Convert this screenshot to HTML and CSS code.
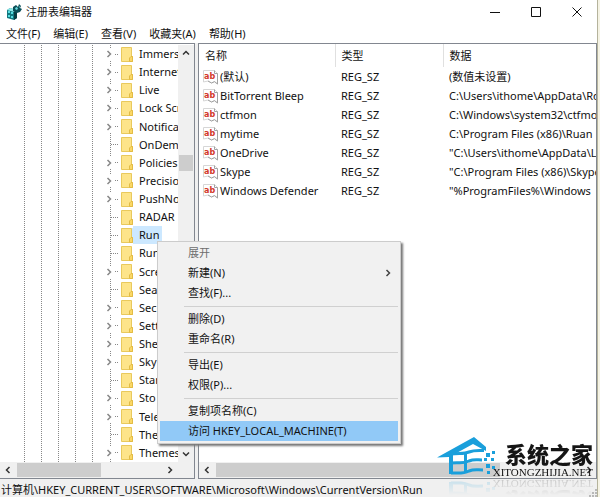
FILE: index.html
```
<!DOCTYPE html>
<html lang="zh-CN">
    <head>
        <title>注册表编辑器</title>
        <meta charset="UTF-8">
        <meta name="viewport" content="width=device-width, initial-scale=1.0">
        <link rel="stylesheet" href="styles.css">
    </head>
    <body>
        <!-- Shared icons -->
        <svg class="symbols" width="0" height="0">
            <symbol id="folder" viewBox="0 0 12 15">
                <path d="M.5.5h10v9h1v5h-11z" fill="#fde48a" stroke="#e9c95c"/>
                <path d="M10 9.500L8.500 11v3.500h3V9.500z" fill="#fbd866" stroke="#e2bb45"/>
            </symbol>
            <symbol id="string" viewBox="0 0 15 15">
                <path d="M.5.500h11l3 3v10.500l-3-2-3 1-3.500-2-4.500 1z" fill="#fff" stroke="#d6d6d6"/>
                <path d="M11.500.500v3h3v10.500l-3-2.500-3 1.500-3.500-2" fill="none" stroke="#a2a2a2"/>
                <text x="1" y="9" class="ab">ab</text>
            </symbol>
            <symbol id="arrow" viewBox="0 0 8 8">
                <path d="M2.500 1L5.500 4L2.500 7" fill="none" stroke="currentColor" stroke-width="1.500"/>
            </symbol>
        </svg>

        <div class="window">
            <header class="titlebar">
                <svg class="app-icon" width="16" height="17" viewBox="0 0 16 17">
                    <path d="M1 6l3-2 7 2v8l-3 2-7-2z" fill="#12777f"/>
                    <path d="M2 7h2v2H2zM5 8h2v2H5zM2 11h2v2H2zM5 12h2v2H5z" fill="#54dce0"/>
                    <path d="M1 6l3-2 7 2-3 2z" fill="#8fe9ea"/>
                    <path d="M8 8v8l3-2V6z" fill="#063c42"/>
                    <path d="M7 3l3-2 2 2 1-3 2 2-1 2 2 1-2 3-3 1-4-2z" fill="#0a4f58"/>
                    <path d="M9 4l2-1 1 2-2 1zM13 3l1-1v2z" fill="#6be0e4"/>
                </svg>
                <h1>注册表编辑器</h1>
                <div class="window-buttons">
                    <button aria-label="最小化"><svg width="10" height="10"><path d="M0 5.500h10"/></svg></button>
                    <button aria-label="最大化"><svg width="10" height="10"><path d="M.5.500h9v9h-9z"/></svg></button>
                    <button aria-label="关闭"><svg width="10" height="10"><path d="M.5.500l9 9M9.500.500l-9 9"/></svg></button>
                </div>
            </header>

            <nav class="menubar">
                <button>文件(F)</button>
                <button>编辑(E)</button>
                <button>查看(V)</button>
                <button>收藏夹(A)</button>
                <button>帮助(H)</button>
            </nav>

            <main class="panes">
                <section class="pane tree-pane">
                    <div class="tree-area">
                        <ul class="tree">
                            <li class="parent"><svg class="toggle"><use href="#arrow"/></svg><svg class="folder"><use href="#folder"/></svg><span>Immersive</span></li>
                            <li class="parent"><svg class="toggle"><use href="#arrow"/></svg><svg class="folder"><use href="#folder"/></svg><span>Internet</span></li>
                            <li class="parent"><svg class="toggle"><use href="#arrow"/></svg><svg class="folder"><use href="#folder"/></svg><span>Live</span></li>
                            <li class="parent"><svg class="toggle"><use href="#arrow"/></svg><svg class="folder"><use href="#folder"/></svg><span>Lock Screen</span></li>
                            <li class="parent"><svg class="toggle"><use href="#arrow"/></svg><svg class="folder"><use href="#folder"/></svg><span>Notifications</span></li>
                            <li><svg class="folder"><use href="#folder"/></svg><span>OnDemand</span></li>
                            <li class="parent"><svg class="toggle"><use href="#arrow"/></svg><svg class="folder"><use href="#folder"/></svg><span>Policies</span></li>
                            <li class="parent"><svg class="toggle"><use href="#arrow"/></svg><svg class="folder"><use href="#folder"/></svg><span>Precision</span></li>
                            <li class="parent"><svg class="toggle"><use href="#arrow"/></svg><svg class="folder"><use href="#folder"/></svg><span>PushNotifications</span></li>
                            <li><svg class="folder"><use href="#folder"/></svg><span>RADAR</span></li>
                            <li class="selected"><svg class="folder"><use href="#folder"/></svg><span>Run</span></li>
                            <li><svg class="folder"><use href="#folder"/></svg><span>Run</span></li>
                            <li class="parent"><svg class="toggle"><use href="#arrow"/></svg><svg class="folder"><use href="#folder"/></svg><span>Scre</span></li>
                            <li><svg class="folder"><use href="#folder"/></svg><span>Sea</span></li>
                            <li class="parent"><svg class="toggle"><use href="#arrow"/></svg><svg class="folder"><use href="#folder"/></svg><span>Sec</span></li>
                            <li class="parent"><svg class="toggle"><use href="#arrow"/></svg><svg class="folder"><use href="#folder"/></svg><span>Sett</span></li>
                            <li class="parent"><svg class="toggle"><use href="#arrow"/></svg><svg class="folder"><use href="#folder"/></svg><span>She</span></li>
                            <li class="parent"><svg class="toggle"><use href="#arrow"/></svg><svg class="folder"><use href="#folder"/></svg><span>Sky</span></li>
                            <li><svg class="folder"><use href="#folder"/></svg><span>Star</span></li>
                            <li class="parent"><svg class="toggle"><use href="#arrow"/></svg><svg class="folder"><use href="#folder"/></svg><span>Sto</span></li>
                            <li class="parent"><svg class="toggle"><use href="#arrow"/></svg><svg class="folder"><use href="#folder"/></svg><span>Tele</span></li>
                            <li><svg class="folder"><use href="#folder"/></svg><span>The</span></li>
                            <li class="parent"><svg class="toggle"><use href="#arrow"/></svg><svg class="folder"><use href="#folder"/></svg><span>Themes</span></li>
                        </ul>
                        <div class="scroll-v">
                            <svg class="up"><use href="#arrow"/></svg>
                            <div class="thumb"></div>
                            <svg class="down"><use href="#arrow"/></svg>
                        </div>
                    </div>
                    <div class="scroll-h">
                        <svg class="left"><use href="#arrow"/></svg>
                        <div class="track"><div class="thumb tree-thumb"></div></div>
                        <svg><use href="#arrow"/></svg>
                    </div>
                </section>

                <section class="pane value-pane">
                    <div class="values">
                        <table>
                            <thead>
                                <tr><th class="name">名称</th><th class="type">类型</th><th>数据</th></tr>
                            </thead>
                            <tbody>
                                <tr><td><svg class="string"><use href="#string"/></svg>(默认)</td><td>REG_SZ</td><td>(数值未设置)</td></tr>
                                <tr><td><svg class="string"><use href="#string"/></svg>BitTorrent Bleep</td><td>REG_SZ</td><td>C:\Users\ithome\AppData\Ro</td></tr>
                                <tr><td><svg class="string"><use href="#string"/></svg>ctfmon</td><td>REG_SZ</td><td>C:\Windows\system32\ctfmon</td></tr>
                                <tr><td><svg class="string"><use href="#string"/></svg>mytime</td><td>REG_SZ</td><td>C:\Program Files (x86)\Ruan</td></tr>
                                <tr><td><svg class="string"><use href="#string"/></svg>OneDrive</td><td>REG_SZ</td><td>"C:\Users\ithome\AppData\Lo</td></tr>
                                <tr><td><svg class="string"><use href="#string"/></svg>Skype</td><td>REG_SZ</td><td>"C:\Program Files (x86)\Skype</td></tr>
                                <tr><td><svg class="string"><use href="#string"/></svg>Windows Defender</td><td>REG_SZ</td><td>"%ProgramFiles%\Windows</td></tr>
                            </tbody>
                        </table>
                    </div>
                    <div class="scroll-h">
                        <svg class="left"><use href="#arrow"/></svg>
                        <div class="track"><div class="thumb value-thumb"></div></div>
                        <svg><use href="#arrow"/></svg>
                    </div>
                </section>
            </main>

            <footer class="statusbar">
                <span>计算机\HKEY_CURRENT_USER\SOFTWARE\Microsoft\Windows\CurrentVersion\Run</span>
                <svg class="grip" width="8" height="8"><path d="M6 0h2v2H6zM3 3h2v2H3zM6 3h2v2H6zM0 6h2v2H0zM3 6h2v2H3zM6 6h2v2H6z" fill="#b8b8b8"/></svg>
            </footer>

            <div class="context-menu">
                <button disabled>展开</button>
                <button>新建(N)<svg><use href="#arrow"/></svg></button>
                <button>查找(F)...</button>
                <hr>
                <button>删除(D)</button>
                <button>重命名(R)</button>
                <hr>
                <button>导出(E)</button>
                <button>权限(P)...</button>
                <hr>
                <button>复制项名称(C)</button>
                <button class="active">访问 HKEY_LOCAL_MACHINE(T)</button>
            </div>

            <div class="brand">
                <svg width="60" height="40" viewBox="0 0 60 40">
                    <path d="M0 20.500L37 0l12 10v4L36 7 16 18v19h-4V20z" fill="#1a9fdb"/>
                    <path d="M14 17c9-1 13 0 18-2s8-1.500 15-1.500M14 26c8-1 12 1 18-2 5-2 8-1 13-1M14 36c8 0 12 1 18-2 5-2 8-1 14-1" fill="none" stroke="#1a9fdb" stroke-width="3"/>
                    <path d="M27 16h3v20h-3z" fill="#1a9fdb"/>
                    <path d="M49 16h4v4h-4zM55 14h3v3h-3zM54 21h3v3h-3zM47 21h3v3h-3zM49 27h4v4h-4zM55 29h3v3h-3zM50 34h3v3h-3z" fill="#1a9fdb"/>
                </svg>
                <div class="brand-text">
                    <strong>系统之家</strong>
                    <small>XITONGZHIJIA.NET</small>
                </div>
            </div>
        </div>
    </body>
</html>
```

FILE: styles.css
```
*{box-sizing:border-box;}

body{
    margin:0;
    font-family:"Noto Sans", "Noto Sans CJK SC", sans-serif;
    font-size:11px;
    line-height:18px;
    color:#111;
    background:#f5f3e4;
}

button{
    margin:0; padding:0;
    border:0;
    background:transparent;
    font:inherit;
    color:inherit;
}

ul{margin:0; padding:0; list-style:none;}

svg{flex:none;}

.symbols{position:absolute;}

.ab{
    font-family:"DejaVu Sans", sans-serif;
    font-size:8px;
    font-weight:bold;
    fill:#d2382a;
}

.window{
    position:relative;
    display:flex;
    flex-direction:column;
    height:100vh;
    margin-right:2px;
    border-right:1px solid #b5b39c;
    background:white;
}

/* Title bar and menu */
.titlebar{
    display:flex;
    align-items:center;
    height:24px;
    padding-left:6px;
}

.titlebar h1{
    flex:1;
    margin:0 0 0 4px;
    font-size:11px;
    font-weight:normal;
}

.window-buttons{display:flex;}

.window-buttons button{
    width:41px; height:22px;
    display:flex;
    align-items:center;
    justify-content:center;
}

.window-buttons path{fill:none; stroke:#111;}

.menubar{
    display:flex;
    gap:13px;
    height:19px;
    padding-left:6px;
}

/* Panes */
.panes{
    flex:1;
    min-height:0;
    display:flex;
    gap:3px;
    background:#f0f0f0;
}

.pane{
    display:flex;
    flex-direction:column;
    border:1px solid #828790;
    background:white;
}

.tree-pane{width:195px; border-left:0; flex:none;}

.value-pane{flex:1; min-width:0;}

.tree-area{
    flex:1;
    min-height:0;
    display:flex;
    padding-top:1px;
}

.tree{
    flex:1;
    min-width:0;
    display:flex;
    flex-direction:column;
    background-image:
        linear-gradient(#888 50%, transparent 50%),
        linear-gradient(#888 50%, transparent 50%),
        linear-gradient(#888 50%, transparent 50%),
        linear-gradient(#888 50%, transparent 50%),
        linear-gradient(#888 50%, transparent 50%),
        linear-gradient(#888 50%, transparent 50%);
    background-size:1px 2px;
    background-repeat:repeat-y;
    background-position:24px 0, 41px 0, 58px 0, 75px 0, 92px 0, 110px 0;
}

.tree li{
    flex:1;
    min-height:0;
    display:flex;
    align-items:center;
    padding-left:111px;
    overflow:hidden;
    white-space:nowrap;
}

.tree li::before{
    content:"";
    flex:none;
    width:7px;
    margin-right:3px;
    border-top:1px dotted #888;
}

.tree .parent{padding-left:105px;}

.tree .parent::before{
    order:1;
    width:3px;
    margin:0 3px 0 2px;
}

.tree .parent > *{order:2;}

.tree .parent .toggle{
    order:0;
    width:8px; height:12px;
    color:#888;
    background:white;
}

.tree .folder{width:12px; height:15px; flex:none;}

.tree span{padding:0 3px 0 6px;}

.selected .folder, .selected span{
    box-sizing:content-box;
    background:#cce8ff;
}

/* Scroll bars */
.scroll-v{
    width:16px;
    display:flex;
    flex-direction:column;
    align-items:center;
    justify-content:space-between;
    padding:4px 0;
    background:#f0f0f0;
}

.scroll-v svg, .scroll-h svg{width:8px; height:8px; color:#333;}

.scroll-v .thumb{width:14px; height:16px; margin-bottom:182px;}

.up{transform:rotate(-90deg);}

.down{transform:rotate(90deg);}

.left{transform:rotate(180deg);}

.thumb{background:#cdcdcd;}

.scroll-h{
    display:flex;
    align-items:center;
    height:16px;
    padding:0 3px 0 4px;
    background:#f0f0f0;
}

.track{flex:1; margin:0 5px;}

.track .thumb{height:14px;}

.tree-pane .scroll-h{padding-right:20px;}

.tree-thumb{width:58%;}

.value-thumb{width:78%;}

/* Value list */
.values{flex:1; min-height:0; overflow:hidden;}

table{
    width:100%;
    table-layout:fixed;
    border-collapse:collapse;
}

th, td{
    height:19px;
    padding:0 0 0 6px;
    text-align:left;
    font-weight:normal;
    white-space:nowrap;
    overflow:hidden;
}

th{height:23px; border-right:1px solid #e0e0e0;}

th:last-child{border-right:0;}

.name{width:136px;}

.type{width:108px;}

td:first-child{padding-left:4px;}

.string{
    width:15px; height:15px;
    margin-right:2px;
    vertical-align:middle;
}

/* Status bar */
.statusbar{
    display:flex;
    justify-content:space-between;
    align-items:flex-end;
    height:18px;
    padding-left:1px;
    background:#f0f0f0;
    white-space:nowrap;
}

.statusbar span{line-height:14px;}

/* Context menu */
.context-menu{
    position:absolute;
    left:157px; top:241px;
    width:244px;
    padding:1px 2px 2px;
    border:1px solid #ccc;
    background:#f1f1f1;
    box-shadow:2px 2px 2px #777;
}

.context-menu button{
    display:flex;
    align-items:center;
    justify-content:space-between;
    width:100%; height:20px;
    padding:0 6px 0 28px;
    text-align:left;
}

.context-menu button:disabled{color:#6d6d6d;}

.context-menu svg{width:8px; height:8px; color:#444;}

.context-menu .active{background:#91c9f7;}

hr{
    margin:3px 0 2px 24px;
    border:0;
    border-top:1px solid #d0d0d0;
}

/* Site logo with its reflection */
.brand{
    position:absolute;
    right:4px; bottom:20px;
    display:flex;
    align-items:flex-end;
    -webkit-box-reflect:below 2px linear-gradient(transparent 60%, rgba(0,0,0,0.2));
}

.brand-text{
    display:flex;
    flex-direction:column;
    align-items:flex-end;
    margin-left:-4px;
}

.brand strong{
    font-size:22px;
    font-weight:900;
    line-height:26px;
    color:#151515;
}

.brand small{
    font-family:"Liberation Serif", serif;
    font-size:11px;
    line-height:10px;
}
```
